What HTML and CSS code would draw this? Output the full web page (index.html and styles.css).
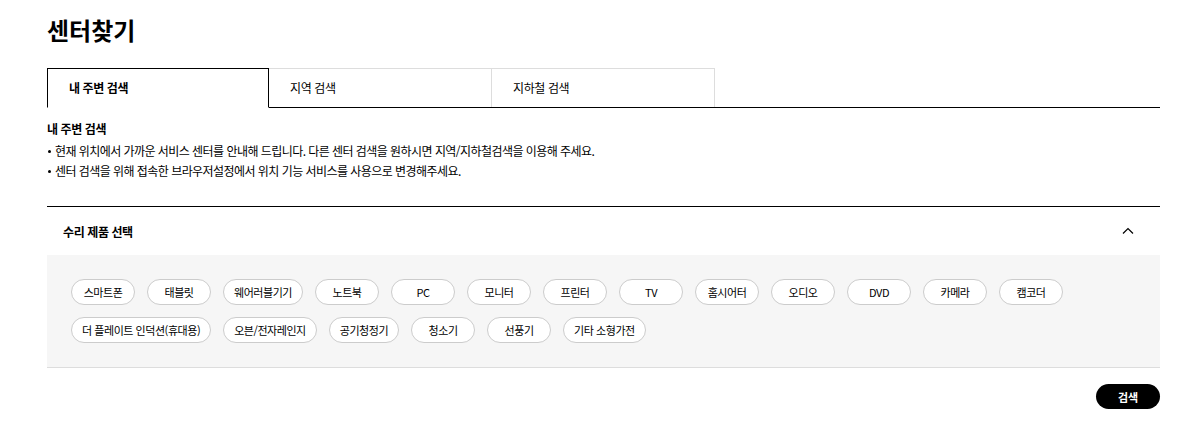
FILE: index.html
```html
<!DOCTYPE html>
<html lang="ko">
<head>
<meta charset="utf-8">
<title>센터찾기</title>
<link rel="stylesheet" href="styles.css">
</head>
<body>
<div class="page">
  <h1 class="title">센터찾기</h1>
  <ul class="tabs">
    <li class="tab active">내 주변 검색</li>
    <li class="tab">지역 검색</li>
    <li class="tab">지하철 검색</li>
    <li class="tab-fill"></li>
  </ul>
  <section class="info">
    <h2 class="info-title">내 주변 검색</h2>
    <ul class="bullets">
      <li>현재 위치에서 가까운 서비스 센터를 안내해 드립니다. 다른 센터 검색을 원하시면 지역/지하철검색을 이용해 주세요.</li>
      <li>센터 검색을 위해 접속한 브라우저설정에서 위치 기능 서비스를 사용으로 변경해주세요.</li>
    </ul>
  </section>
  <section class="acc">
    <div class="acc-head">
      <span class="acc-title">수리 제품 선택</span>
      <svg class="chev" width="12" height="8" viewBox="0 0 12 8"><path d="M1 6.5 L6 1.5 L11 6.5" fill="none" stroke="#000" stroke-width="1.2"/></svg>
    </div>
    <div class="acc-body">
      <div class="chips">
        <span class="chip">스마트폰</span>
        <span class="chip">태블릿</span>
        <span class="chip">웨어러블기기</span>
        <span class="chip">노트북</span>
        <span class="chip">PC</span>
        <span class="chip">모니터</span>
        <span class="chip">프린터</span>
        <span class="chip">TV</span>
        <span class="chip">홈시어터</span>
        <span class="chip">오디오</span>
        <span class="chip">DVD</span>
        <span class="chip">카메라</span>
        <span class="chip">캠코더</span>
        <span class="chip">더 플레이트 인덕션(휴대용)</span>
        <span class="chip">오븐/전자레인지</span>
        <span class="chip">공기청정기</span>
        <span class="chip">청소기</span>
        <span class="chip">선풍기</span>
        <span class="chip">기타 소형가전</span>
      </div>
    </div>
  </section>
  <div class="actions">
    <button class="btn-search">검색</button>
  </div>
</div>
</body>
</html>
```

FILE: styles.css
```css
* { box-sizing: border-box; }
html, body { margin: 0; padding: 0; background: #fff; }
body {
  font-family: "Noto Sans CJK KR", "Noto Sans", sans-serif;
  color: #000;
}
.page {
  padding: 0 36px 0 47px;
}
.title {
  margin: 0;
  padding-top: 11px;
  height: 68px;
  font-size: 24px;
  line-height: 38px;
  font-weight: 700;
  letter-spacing: 0;
}
.tabs {
  list-style: none;
  margin: 0;
  padding: 0;
  display: flex;
  height: 40px;
  border-bottom: 1px solid #000;
}
.tab {
  width: 223px;
  height: 39px;
  border-top: 1px solid #ddd;
  border-right: 1px solid #ddd;
  padding-left: 21px;
  font-size: 12px;
  line-height: 37px;
  letter-spacing: -0.4px;
}
.tab.active {
  width: 222px;
  border: 1px solid #000;
  border-bottom: 1px solid #fff;
  height: 40px;
  font-weight: 700;
  padding-left: 21px;
}
.tab-fill { flex: 1; }
.info { padding-top: 12px; height: 98px; }
.info-title {
  margin: 0;
  font-size: 12px;
  line-height: 18px;
  font-weight: 700;
  letter-spacing: -0.4px;
}
.bullets {
  list-style: none;
  margin: 3px 0 0;
  padding: 0;
}
.bullets li {
  position: relative;
  padding-left: 8px;
  font-size: 12px;
  line-height: 20px;
  letter-spacing: -0.55px;
}
.bullets li::before {
  content: "";
  position: absolute;
  left: 1px;
  top: 9px;
  width: 3px;
  height: 3px;
  border-radius: 50%;
  background: #000;
}
.acc { border-top: 1px solid #000; }
.acc-head {
  height: 48px;
  display: flex;
  align-items: center;
  justify-content: space-between;
  padding: 0 26px 0 16px;
}
.acc-title {
  font-size: 12px;
  font-weight: 700;
  letter-spacing: -0.4px;
}
.acc-body {
  background: #f6f6f6;
  border-bottom: 1px solid #ddd;
  padding: 24px 24px 24px;
}
.chips {
  display: flex;
  flex-wrap: wrap;
  gap: 12px;
}
.chip {
  min-width: 64px;
  height: 26px;
  padding: 0 10px;
  border: 1px solid #ccc;
  border-radius: 13px;
  background: #fff;
  font-size: 11px;
  line-height: 24px;
  text-align: center;
  letter-spacing: -0.45px;
}
.actions {
  display: flex;
  justify-content: flex-end;
  padding-top: 16px;
}
.btn-search {
  width: 64px;
  height: 25px;
  border: 0;
  border-radius: 13px;
  background: #000;
  color: #fff;
  font-family: inherit;
  font-size: 11px;
  font-weight: 700;
  padding: 0;
}
```
